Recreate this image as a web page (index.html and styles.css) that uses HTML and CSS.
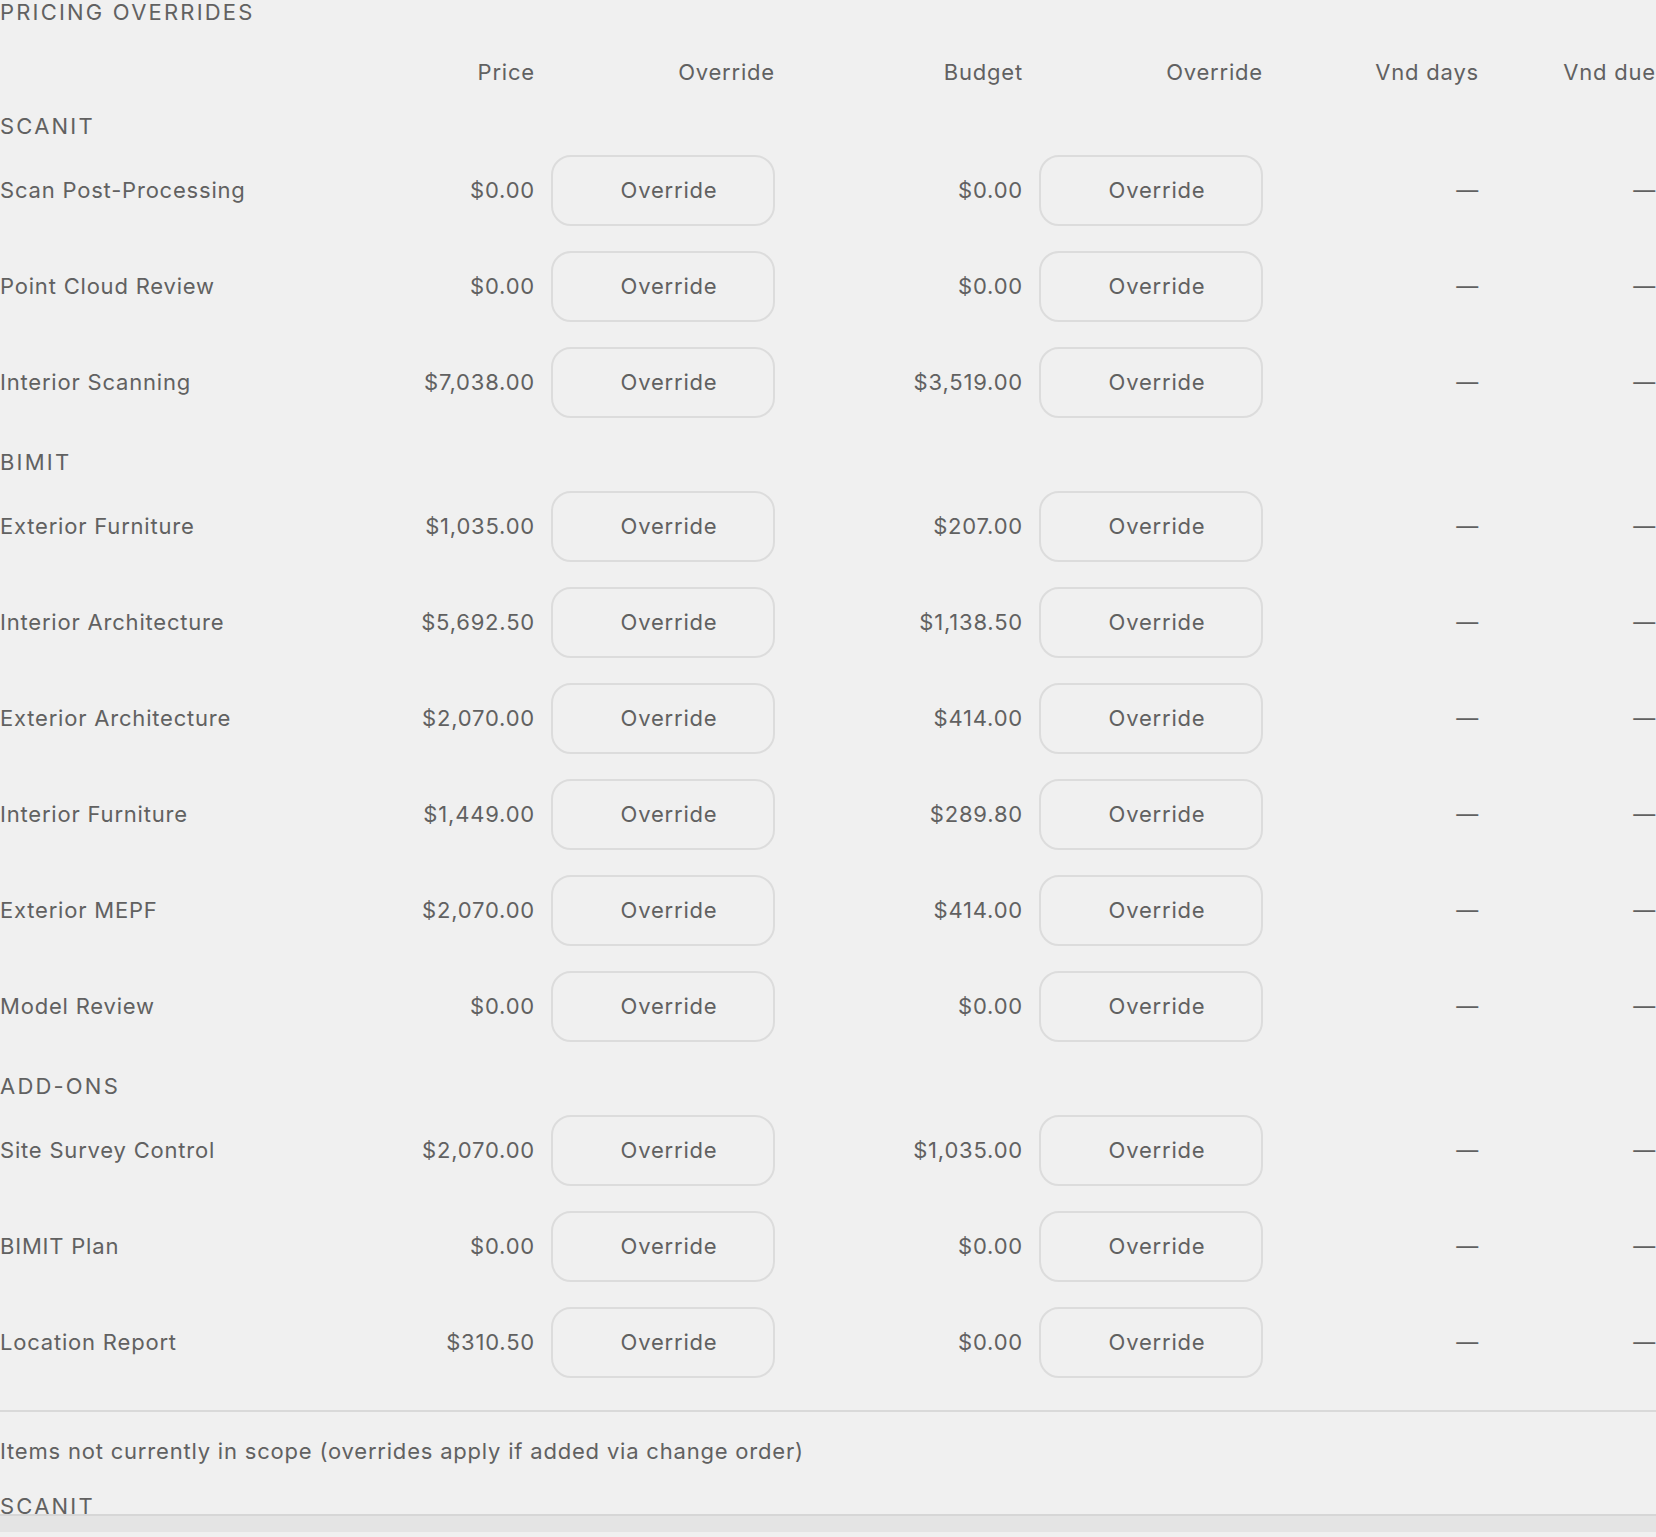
FILE: index.html
```html
<!DOCTYPE html>
<html lang="en">
<head>
    <meta charset="UTF-8">
    <meta name="viewport" content="width=device-width, initial-scale=1.0">
    <title>Pricing overrides</title>
    <link rel="stylesheet" href="styles.css">
</head>
<body>
    <div class="panel">
        <div class="panel-title">PRICING OVERRIDES</div>

        <table class="pricing">
            <colgroup>
                <col class="c-name"><col class="c-price"><col class="c-btn">
                <col class="c-budget"><col class="c-btn"><col class="c-days"><col class="c-due">
            </colgroup>
            <thead>
                <tr>
                    <th></th>
                    <th>Price</th>
                    <th>Override</th>
                    <th>Budget</th>
                    <th>Override</th>
                    <th>Vnd days</th>
                    <th>Vnd due</th>
                </tr>
            </thead>
            <tbody>
                <tr class="group"><td colspan="7">SCANIT</td></tr>
                <tr>
                    <td>Scan Post-Processing</td><td>$0.00</td>
                    <td><button class="override-btn">Override</button></td>
                    <td>$0.00</td>
                    <td><button class="override-btn">Override</button></td>
                    <td>—</td><td>—</td>
                </tr>
                <tr>
                    <td>Point Cloud Review</td><td>$0.00</td>
                    <td><button class="override-btn">Override</button></td>
                    <td>$0.00</td>
                    <td><button class="override-btn">Override</button></td>
                    <td>—</td><td>—</td>
                </tr>
                <tr>
                    <td>Interior Scanning</td><td>$7,038.00</td>
                    <td><button class="override-btn">Override</button></td>
                    <td>$3,519.00</td>
                    <td><button class="override-btn">Override</button></td>
                    <td>—</td><td>—</td>
                </tr>

                <tr class="group"><td colspan="7">BIMIT</td></tr>
                <tr>
                    <td>Exterior Furniture</td><td>$1,035.00</td>
                    <td><button class="override-btn">Override</button></td>
                    <td>$207.00</td>
                    <td><button class="override-btn">Override</button></td>
                    <td>—</td><td>—</td>
                </tr>
                <tr>
                    <td>Interior Architecture</td><td>$5,692.50</td>
                    <td><button class="override-btn">Override</button></td>
                    <td>$1,138.50</td>
                    <td><button class="override-btn">Override</button></td>
                    <td>—</td><td>—</td>
                </tr>
                <tr>
                    <td>Exterior Architecture</td><td>$2,070.00</td>
                    <td><button class="override-btn">Override</button></td>
                    <td>$414.00</td>
                    <td><button class="override-btn">Override</button></td>
                    <td>—</td><td>—</td>
                </tr>
                <tr>
                    <td>Interior Furniture</td><td>$1,449.00</td>
                    <td><button class="override-btn">Override</button></td>
                    <td>$289.80</td>
                    <td><button class="override-btn">Override</button></td>
                    <td>—</td><td>—</td>
                </tr>
                <tr>
                    <td>Exterior MEPF</td><td>$2,070.00</td>
                    <td><button class="override-btn">Override</button></td>
                    <td>$414.00</td>
                    <td><button class="override-btn">Override</button></td>
                    <td>—</td><td>—</td>
                </tr>
                <tr>
                    <td>Model Review</td><td>$0.00</td>
                    <td><button class="override-btn">Override</button></td>
                    <td>$0.00</td>
                    <td><button class="override-btn">Override</button></td>
                    <td>—</td><td>—</td>
                </tr>

                <tr class="group"><td colspan="7">ADD-ONS</td></tr>
                <tr>
                    <td>Site Survey Control</td><td>$2,070.00</td>
                    <td><button class="override-btn">Override</button></td>
                    <td>$1,035.00</td>
                    <td><button class="override-btn">Override</button></td>
                    <td>—</td><td>—</td>
                </tr>
                <tr>
                    <td>BIMIT Plan</td><td>$0.00</td>
                    <td><button class="override-btn">Override</button></td>
                    <td>$0.00</td>
                    <td><button class="override-btn">Override</button></td>
                    <td>—</td><td>—</td>
                </tr>
                <tr>
                    <td>Location Report</td><td>$310.50</td>
                    <td><button class="override-btn">Override</button></td>
                    <td>$0.00</td>
                    <td><button class="override-btn">Override</button></td>
                    <td>—</td><td>—</td>
                </tr>
            </tbody>
        </table>

        <div class="out-of-scope">
            <p class="note">Items not currently in scope (overrides apply if added via change order)</p>
            <div class="group-label">SCANIT</div>
        </div>
    </div>
    <div class="scroll-track"></div>
</body>
</html>
```

FILE: styles.css
```css
body {
    margin: 0;
    background-color: #f0f0f0;
    color: #616161;
    font-family: Inter, "Noto Sans", Arial, sans-serif;
    font-size: 22px;
    line-height: 24px;
    letter-spacing: 0.8px;
}
.panel {
    height: 1514px;
    overflow: hidden;
}
.panel-title {
    letter-spacing: 0.1em;
}
.pricing {
    width: 1664px;
    table-layout: fixed;
    border-collapse: collapse;
}
.c-name { width: 300px; }
.c-price { width: 243px; }
.c-btn { width: 240px; }
.c-budget { width: 248px; }
.c-days { width: 216px; }
.c-due { width: 177px; }

.pricing th,
.pricing td {
    padding: 0 8px;
    text-align: right;
    white-space: nowrap;
}
.pricing th:first-child,
.pricing td:first-child {
    padding-left: 0;
    text-align: left;
}
.pricing th {
    font-weight: normal;
    padding-top: 36px;
    padding-bottom: 10px;
}
.pricing td {
    height: 96px;
}
.pricing tr.group td {
    height: auto;
    padding-top: 20px;
    padding-bottom: 4px;
    letter-spacing: 0.1em;
}
.override-btn {
    display: block;
    width: 100%;
    height: 71px;
    padding: 0 0 0 12px;
    background-color: #f0f0f0;
    border: 2px solid #dcdcdc;
    border-radius: 20px;
    color: #616161;
    font-family: inherit;
    font-size: 22px;
    letter-spacing: 0.8px;
    cursor: pointer;
}
.out-of-scope {
    margin-top: 20px;
    border-top: 2px solid #d9d9d9;
    padding-top: 27px;
}
.note {
    margin: 0;
}
.group-label {
    margin-top: 31px;
    letter-spacing: 0.1em;
}
.scroll-track {
    height: 16px;
    background-color: #e4e4e4;
    border-top: 2px solid #d6d6d6;
}
```
